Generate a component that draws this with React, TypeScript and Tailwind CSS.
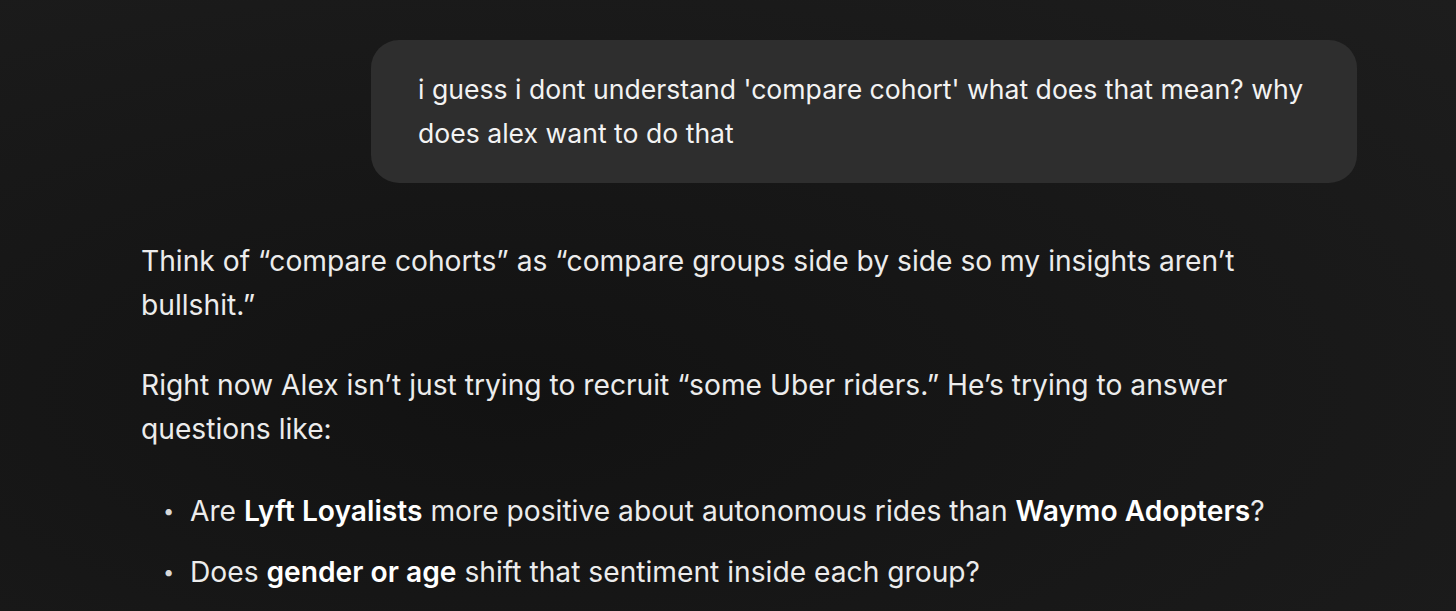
export default function App() {
  return (
    <div
      className="w-[1456px] h-[611px] overflow-hidden bg-[#1b1b1b] bg-[radial-gradient(ellipse_at_35%_65%,#121212_0%,#171717_45%,#1d1d1d_100%)] text-[#ececec] antialiased"
      style={{ fontFamily: 'Inter, "Noto Sans", sans-serif' }}
    >
      <div className="pt-[40px] pr-[99px] flex justify-end">
        <div className="w-[986px] rounded-[28px] bg-[#2e2e2e] pl-[47px] pr-[44px] pt-[27px] pb-[28px] text-[26.6px] leading-[44px] text-[#f3f3f3]">
          i guess i dont understand 'compare cohort' what does that mean? why does alex want to do that
        </div>
      </div>

      <div className="mt-[56px] ml-[141px] w-[1170px] text-[28.2px] leading-[44px]">
        <p>Think of “compare cohorts” as “compare groups side by side so my insights aren’t bullshit.”</p>
        <p className="mt-[36px]">
          Right now Alex isn’t just trying to recruit “some Uber riders.” He’s trying to answer questions like:
        </p>
        <ul className="mt-[38px] flex flex-col gap-[17px]">
          <li className="flex">
            <span className="w-[49px] pl-[22px] text-[20px] text-[#d8d8d8]">•</span>
            <span>
              Are <b className="font-semibold text-white">Lyft Loyalists</b> more positive about autonomous rides than{' '}
              <b className="font-semibold text-white">Waymo Adopters</b>?
            </span>
          </li>
          <li className="flex">
            <span className="w-[49px] pl-[22px] text-[20px] text-[#d8d8d8]">•</span>
            <span>
              Does <b className="font-semibold text-white">gender or age</b> shift that sentiment inside each group?
            </span>
          </li>
        </ul>
      </div>
    </div>
  );
}
